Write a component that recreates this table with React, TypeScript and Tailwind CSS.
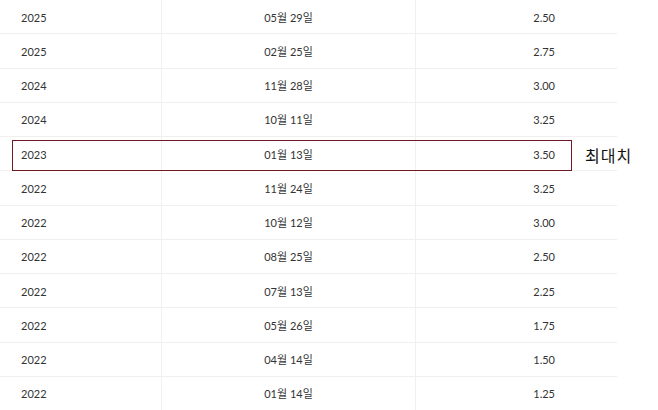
import React from "react";

const rows: [string, string, string][] = [
  ["2025", "05월 29일", "2.50"],
  ["2025", "02월 25일", "2.75"],
  ["2024", "11월 28일", "3.00"],
  ["2024", "10월 11일", "3.25"],
  ["2023", "01월 13일", "3.50"],
  ["2022", "11월 24일", "3.25"],
  ["2022", "10월 12일", "3.00"],
  ["2022", "08월 25일", "2.50"],
  ["2022", "07월 13일", "2.25"],
  ["2022", "05월 26일", "1.75"],
  ["2022", "04월 14일", "1.50"],
  ["2022", "01월 14일", "1.25"],
];

export default function App() {
  return (
    <div
      className="relative w-[658px] h-[410px] overflow-hidden bg-white text-[#333333]"
      style={{ fontFamily: 'Lato, "Noto Sans CJK KR", sans-serif' }}
    >
      <div className="w-[617px] flex flex-col">
        {rows.map((r, i) => (
          <div
            key={i}
            className="grid grid-cols-[162px_254px_201px] h-[34.25px] border-b border-[#efefef] text-[11px] leading-none"
          >
            <div className="flex items-center pt-px pl-[21px] border-r border-[#f0f0f0]">{r[0]}</div>
            <div className="flex items-center pt-px justify-center border-r border-[#f0f0f0]">{r[1]}</div>
            <div className="flex items-center pt-px justify-end pr-[62px]">{r[2]}</div>
          </div>
        ))}
      </div>
      <div className="absolute left-[12px] top-[140px] w-[560px] h-[31px] border-[1.5px] border-[#6f1a25]" />
      <div
        className="absolute left-[585px] top-[144px] text-[16px] leading-[22px] text-[#111111] tracking-[1px]"
        style={{ fontFamily: '"Noto Sans CJK KR", sans-serif' }}
      >
        최대치
      </div>
    </div>
  );
}
